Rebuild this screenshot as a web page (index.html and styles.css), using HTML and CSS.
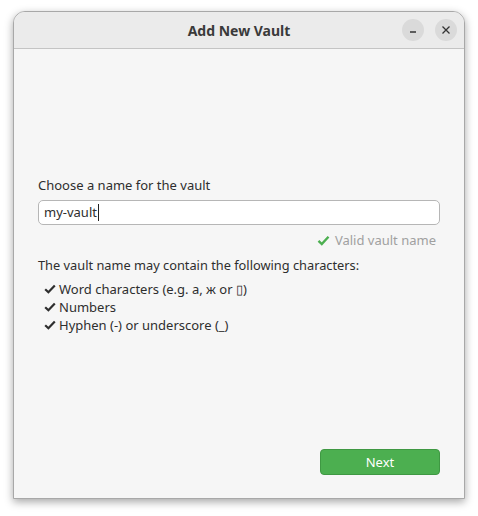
FILE: index.html
```html
<!DOCTYPE html>
<html lang="en">
<head>
    <meta charset="utf-8">
    <title>Add New Vault</title>
    <link rel="stylesheet" href="styles.css">
</head>
<body>
<div class="window">
    <div class="titlebar">
        <div class="title">Add New Vault</div>
        <div class="controls">
            <span class="ctl">
                <svg width="10" height="10" viewBox="0 0 10 10"><path d="M2 7h6" stroke="#333" stroke-width="1.3"/></svg>
            </span>
            <span class="ctl">
                <svg width="10" height="10" viewBox="0 0 10 10"><path d="M1.5 1.5l7 7M8.5 1.5l-7 7" stroke="#333" stroke-width="1.3"/></svg>
            </span>
        </div>
    </div>
    <div class="content">
        <div class="label">Choose a name for the vault</div>
        <div class="field">my-vault<span class="caret"></span></div>
        <div class="valid">
            <svg width="13" height="11" viewBox="0 0 13 11"><path d="M1.5 5.8l3.3 3.2 6.7-7.2" fill="none" stroke="#4caf50" stroke-width="2.4"/></svg>
            Valid vault name
        </div>
        <div class="info">The vault name may contain the following characters:</div>
        <ul class="rules">
            <li><svg width="12" height="10" viewBox="0 0 12 10"><path d="M1.2 5.2l3.2 3.1 6.4-6.8" fill="none" stroke="#2e2e2e" stroke-width="2.2"/></svg>Word characters (e.g. a, ж or &#x25AF;)</li>
            <li><svg width="12" height="10" viewBox="0 0 12 10"><path d="M1.2 5.2l3.2 3.1 6.4-6.8" fill="none" stroke="#2e2e2e" stroke-width="2.2"/></svg>Numbers</li>
            <li><svg width="12" height="10" viewBox="0 0 12 10"><path d="M1.2 5.2l3.2 3.1 6.4-6.8" fill="none" stroke="#2e2e2e" stroke-width="2.2"/></svg>Hyphen (-) or underscore (_)</li>
        </ul>
        <div class="spacer"></div>
        <div class="actions">
            <button class="next">Next</button>
        </div>
    </div>
</div>
</body>
</html>
```

FILE: styles.css
```css
*{margin:0;padding:0;box-sizing:border-box;}
body{background:#fff;font-family:"Noto Sans","Open Sans",sans-serif;color:#2e2e2e;padding:11px 13px 0 13px;width:478px;height:516px;}
.window{width:452px;height:488px;background:#f6f6f6;border:1px solid #a8a8a8;border-radius:12px 12px 0 0;box-shadow:0 3px 8px rgba(0,0,0,0.35);display:flex;flex-direction:column;overflow:hidden;}
.titlebar{height:37px;background:#ebebeb;border-bottom:1px solid #c4c4c4;display:flex;align-items:center;justify-content:center;position:relative;flex-shrink:0;}
.title{font-size:14px;font-weight:bold;color:#3a3a3a;}
.controls{position:absolute;right:7px;top:7px;display:flex;gap:11px;}
.ctl{width:22px;height:22px;border-radius:50%;background:#dadada;display:flex;align-items:center;justify-content:center;}
.content{flex:1;display:flex;flex-direction:column;padding:127px 24px 23px 24px;}
.label{font-size:13px;line-height:18px;margin-bottom:6px;}
.field{height:25px;background:#fff;border:1px solid #b6b6b6;border-radius:5px;font-size:13px;line-height:23px;padding-left:5px;display:flex;align-items:center;}
.caret{display:inline-block;width:1px;height:17px;background:#222;margin-left:1px;}
.valid{align-self:flex-end;margin:6px 4px 0 0;font-size:13px;line-height:18px;color:#a0a0a0;display:flex;align-items:center;gap:5px;}
.info{font-size:12.8px;line-height:18px;margin-top:7px;}
.rules{list-style:none;margin-top:6px;padding-left:6px;}
.rules li{font-size:13px;line-height:18px;display:flex;align-items:center;gap:3px;}
.spacer{flex:1;}
.actions{display:flex;justify-content:flex-end;}
.next{width:120px;height:26px;background:#4caf50;border:1px solid #3f9843;border-radius:4px;color:#fff;font-family:"Noto Sans","Open Sans",sans-serif;font-size:13px;}
```
